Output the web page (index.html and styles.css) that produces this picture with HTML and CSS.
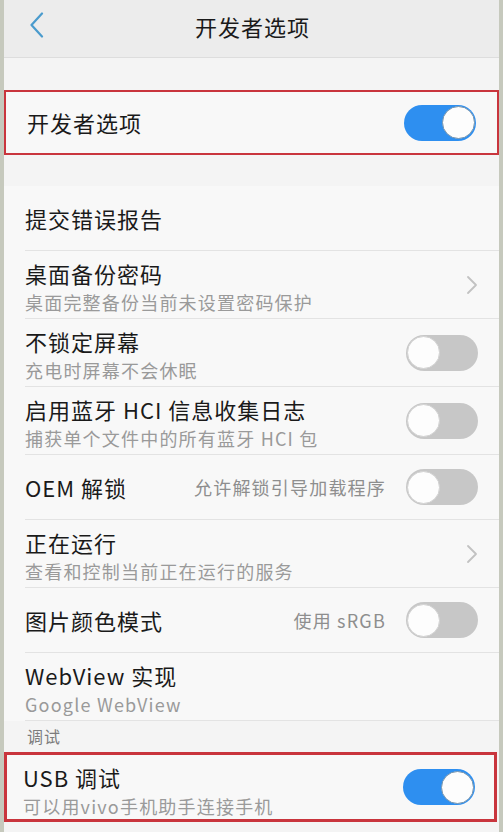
FILE: index.html
```html
<!DOCTYPE html>
<html>
<head>
  <meta charset="utf-8">
  <link rel="stylesheet" href="styles.css">
</head>
<body>
  <div class="screen">
    <div class="topbar">
      <svg class="back" width="16" height="26" viewBox="0 0 16 26">
        <path d="M13 1.5 L2.5 13 L13 24.5" fill="none" stroke="#4a9bcd" stroke-width="2.2" stroke-linecap="round" stroke-linejoin="round"/>
      </svg>
      <div class="title">开发者选项</div>
    </div>

    <div class="gap gap-top"></div>

    <div class="mark mark-first">
      <div class="row row-single no-line">
        <div class="row-body">
          <div class="label">开发者选项</div>
          <div class="switch on"><span class="knob"></span></div>
        </div>
      </div>
    </div>

    <div class="gap gap-mid"></div>

    <div class="list">
      <div class="row row-single">
        <div class="row-body">
          <div class="label">提交错误报告</div>
        </div>
      </div>
      <div class="row row-double">
        <div class="row-body">
          <div class="text">
            <div class="label">桌面备份密码</div>
            <div class="sub">桌面完整备份当前未设置密码保护</div>
          </div>
          <svg class="chevron" width="12" height="20" viewBox="0 0 12 20">
            <path d="M2 2 L10 10 L2 18" fill="none" stroke="#c2c2c2" stroke-width="1.8" stroke-linecap="round" stroke-linejoin="round"/>
          </svg>
        </div>
      </div>
      <div class="row row-double">
        <div class="row-body">
          <div class="text">
            <div class="label">不锁定屏幕</div>
            <div class="sub">充电时屏幕不会休眠</div>
          </div>
          <div class="switch"><span class="knob"></span></div>
        </div>
      </div>
      <div class="row row-double">
        <div class="row-body">
          <div class="text">
            <div class="label">启用蓝牙 HCI 信息收集日志</div>
            <div class="sub">捕获单个文件中的所有蓝牙 HCI 包</div>
          </div>
          <div class="switch"><span class="knob"></span></div>
        </div>
      </div>
      <div class="row row-single">
        <div class="row-body">
          <div class="label">OEM 解锁</div>
          <div class="value">允许解锁引导加载程序</div>
          <div class="switch"><span class="knob"></span></div>
        </div>
      </div>
      <div class="row row-double">
        <div class="row-body">
          <div class="text">
            <div class="label">正在运行</div>
            <div class="sub">查看和控制当前正在运行的服务</div>
          </div>
          <svg class="chevron" width="12" height="20" viewBox="0 0 12 20">
            <path d="M2 2 L10 10 L2 18" fill="none" stroke="#c2c2c2" stroke-width="1.8" stroke-linecap="round" stroke-linejoin="round"/>
          </svg>
        </div>
      </div>
      <div class="row row-single">
        <div class="row-body">
          <div class="label">图片颜色模式</div>
          <div class="value">使用 sRGB</div>
          <div class="switch"><span class="knob"></span></div>
        </div>
      </div>
      <div class="row row-double">
        <div class="row-body">
          <div class="text">
            <div class="label">WebView 实现</div>
            <div class="sub">Google WebView</div>
          </div>
        </div>
      </div>
    </div>

    <div class="section">调试</div>

    <div class="mark mark-usb">
      <div class="row row-double no-line">
        <div class="row-body">
          <div class="text">
            <div class="label">USB 调试</div>
            <div class="sub">可以用vivo手机助手连接手机</div>
          </div>
          <div class="switch on"><span class="knob"></span></div>
        </div>
      </div>
    </div>
  </div>
</body>
</html>
```

FILE: styles.css
```css
body {
  margin: 0;
  background: #c6c9bd;
  font-family: "Noto Sans CJK SC", "Noto Sans", sans-serif;
  color: #1a1a1a;
}
.screen {
  margin-left: 4px;
  width: 495px;
  height: 832px;
  background: #f4f4f4;
  overflow: hidden;
}
.topbar {
  height: 57px;
  background: #ececec;
  border-bottom: 1px solid #dddddd;
  display: flex;
  align-items: center;
  justify-content: center;
  position: relative;
}
.back {
  position: absolute;
  left: 25px;
  top: 12px;
}
.title {
  font-size: 22px;
  letter-spacing: 1px;
  color: #1a1a1a;
  padding-left: 2px;
  margin-top: -6px;
}
.gap-top {
  height: 32px;
}
.gap-mid {
  height: 31px;
}
.mark {
  border: 2px solid #c9353d;
  background: #f8f8f8;
}
.mark-first {
  height: 61px;
}
.mark-first .row-single {
  height: 61px;
}
.mark-usb {
  border-width: 3px;
  margin-right: 2px;
  height: 64px;
}
.mark-usb .row {
  padding-left: 16px;
  height: 64px;
}
.mark-usb .row-body {
  padding-top: 5px;
  padding-right: 19px;
}
.list {
  background: #f8f8f8;
}
.row {
  padding-left: 21px;
}
.row-body {
  height: 100%;
  display: flex;
  align-items: center;
  padding-right: 21px;
  border-bottom: 1px solid #e3e3e3;
  box-sizing: border-box;
}
.no-line .row-body {
  border-bottom: none;
}
.row-single {
  height: 65px;
}
.row-double {
  height: 68px;
}
.row-double .row-body {
  align-items: flex-start;
  padding-top: 8px;
}
.row-double .switch,
.row-double .chevron {
  align-self: center;
  margin-top: -8px;
}
.text {
  flex: 1;
}
.label {
  font-size: 22px;
  line-height: 29px;
  letter-spacing: 1px;
  flex: 1;
  white-space: nowrap;
}
.sub {
  font-size: 18px;
  line-height: 28px;
  letter-spacing: 1.2px;
  color: #9a9a9a;
  white-space: nowrap;
}
.value {
  font-size: 18px;
  letter-spacing: 1.2px;
  color: #8e8e8e;
  margin-right: 20px;
}
.switch {
  width: 72px;
  height: 36px;
  border-radius: 18px;
  background: #c7c7c7;
  display: flex;
  align-items: center;
  padding: 0 1px;
  box-sizing: border-box;
  flex-shrink: 0;
}
.knob {
  width: 33px;
  height: 33px;
  border-radius: 50%;
  background: #fdfdfd;
  border: 1px solid #d2d2d2;
  box-sizing: border-box;
}
.switch.on {
  background: #2e8ff0;
  justify-content: flex-end;
}
.switch.on .knob {
  border: 1.5px solid #7895ad;
}
.section {
  height: 31px;
  padding-left: 23px;
  font-size: 16px;
  line-height: 31px;
  letter-spacing: 1px;
  color: #7c7c7c;
  background: #f4f4f4;
}
```
